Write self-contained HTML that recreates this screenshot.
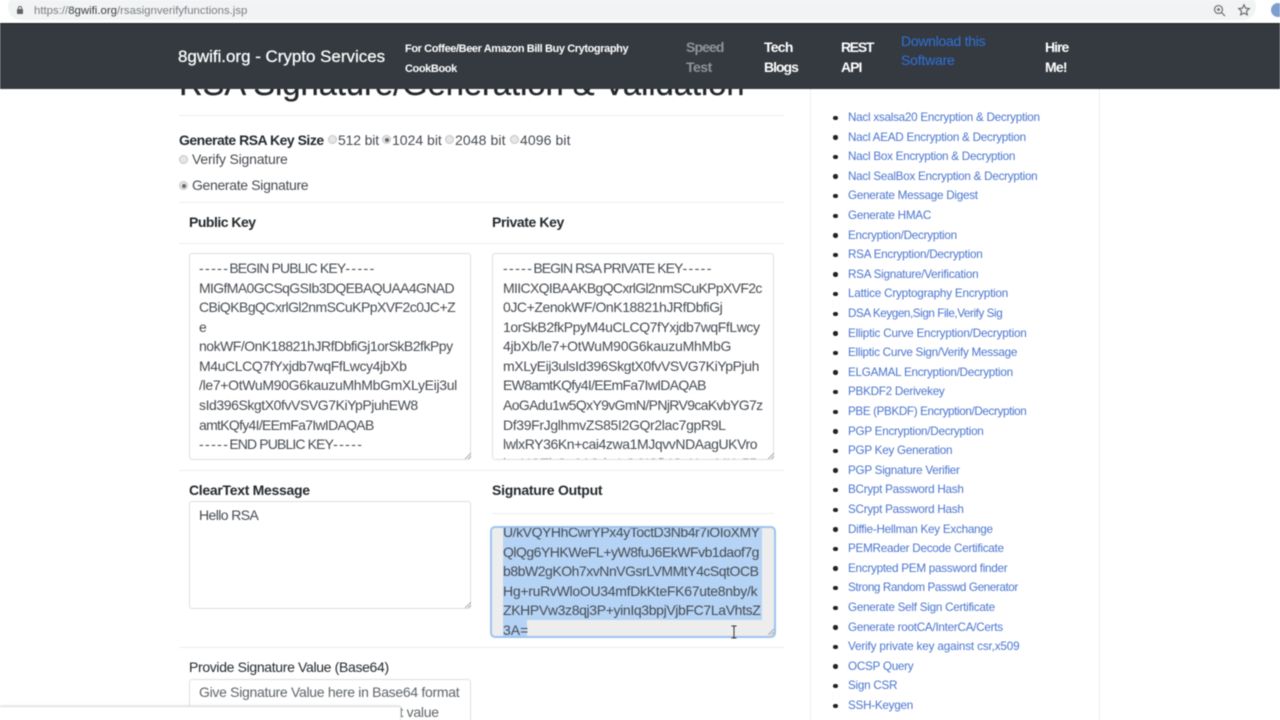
<!DOCTYPE html>
<html><head><meta charset="utf-8"><title>RSA Signature</title>
<style>
html,body{margin:0;padding:0;width:1280px;height:720px;overflow:hidden;background:#fff}
#w{position:relative;width:1280px;height:720px;overflow:hidden;font-family:"Liberation Sans",Arial,sans-serif;font-size:14px;color:#464b51;filter:blur(.4px)}
.a{position:absolute}
.t{position:absolute;white-space:pre;line-height:20px;height:20px}
.hr{position:absolute;height:1px;background:#ececec}
.b{font-weight:700;color:#24292d}
.ta{position:absolute;box-sizing:border-box;border:1px solid #dcdfe2;border-radius:3px;background:#fff;overflow:hidden}
.r{position:absolute;width:9px;height:9px;border-radius:50%;background:#e6e6e6;border:1px solid #c4c4c4;box-sizing:border-box}
.r.on::after{content:"";position:absolute;left:1.5px;top:1.5px;width:4px;height:4px;border-radius:50%;background:#666}
.n{color:#fff;font-weight:700;font-size:14px;letter-spacing:-.5px}
.s{font-size:11px;letter-spacing:-.4px}
.l{color:#4a74cf;font-size:11.7px;left:848px;letter-spacing:-.26px;margin-top:.6px}
.d{position:absolute;left:833px;width:4.5px;height:4.5px;border-radius:50%;background:#222}
.sel{background:#b5d3f5}
.k{letter-spacing:1.4px}
.m{letter-spacing:-.87px}
</style></head><body><div id="w">

<div class="a" style="left:8px;top:-6px;width:1248px;height:26px;background:#f1f3f4;border-radius:13px"></div>
<svg class="a" style="left:15px;top:5px" width="10" height="10" viewBox="0 0 10 10"><rect x="2" y="4" width="6" height="5" rx=".6" fill="#5f6368"/><path d="M3.4 4V3a1.6 1.6 0 0 1 3.2 0v1" fill="none" stroke="#5f6368"/></svg>
<div class="t" style="left:34px;top:1px;font-size:11.4px;color:#7a7e83">https://<span style="color:#3c4043">8gwifi.org</span>/rsasignverifyfunctions.jsp</div>
<svg class="a" style="left:1213px;top:4px" width="13" height="13" viewBox="0 0 13 13" fill="none" stroke="#5f6368" stroke-width="1.1"><circle cx="5.5" cy="5.5" r="4"/><path d="M8.5 8.5l3.5 3.5M3.7 5.5h3.6M5.5 3.7v3.6"/></svg>
<svg class="a" style="left:1237px;top:3px" width="14" height="14" viewBox="0 0 14 14" fill="none" stroke="#5f6368" stroke-width="1.1"><path d="M7 1.8l1.6 3.4 3.7.4-2.8 2.5.8 3.7L7 10l-3.3 1.8.8-3.7L1.7 5.6l3.7-.4z"/></svg>
<div class="a" style="left:1271px;top:3px;width:14px;height:14px;border-radius:50%;background:#7d9fd0"></div>

<div class="t" style="left:179px;top:61px;font-size:32.65px;line-height:46px;height:46px;color:#23272b;-webkit-text-stroke:.3px #23272b">RSA Signature/Generation &amp; Validation</div>

<div class="a" style="left:0;top:24px;width:1280px;height:65px;background:#343a40"></div>
<div class="a" style="left:0;top:23px;width:1280px;height:1px;background:#222"></div>
<div class="t" style="left:178px;top:47px;font-size:16.95px;color:#fff;-webkit-text-stroke:.25px #fff">8gwifi.org - Crypto Services</div>
<div class="t n s" style="left:405px;top:39px">For Coffee/Beer Amazon Bill Buy Crytography</div>
<div class="t n s" style="left:405px;top:59px">CookBook</div>
<div class="t n" style="left:686px;top:37px;color:#8f9499;letter-spacing:-.9px">Speed</div>
<div class="t n" style="left:686px;top:57px;color:#8f9499">Test</div>
<div class="t n" style="left:764px;top:37px;letter-spacing:-.75px">Tech</div>
<div class="t n" style="left:764px;top:57px;letter-spacing:-1px">Blogs</div>
<div class="t n" style="left:841px;top:37px;letter-spacing:-1.3px">REST</div>
<div class="t n" style="left:841px;top:57px;letter-spacing:-1px">API</div>
<div class="t n" style="left:901px;top:31px;color:#2f72de;font-weight:400;letter-spacing:-.28px">Download this</div>
<div class="t n" style="left:901px;top:50px;color:#2f72de;font-weight:400;letter-spacing:-.2px">Software</div>
<div class="t n" style="left:1045px;top:37px;letter-spacing:-1px">Hire</div>
<div class="t n" style="left:1045px;top:57px;letter-spacing:-.8px">Me!</div>

<div class="hr" style="left:179px;top:115px;width:605px"></div>
<div class="t b" style="left:179px;top:130px;letter-spacing:-.5px">Generate RSA Key Size</div>
<div class="r" style="left:328px;top:135px"></div><div class="t" style="left:338px;top:130px;letter-spacing:-.15px">512 bit</div>
<div class="r on" style="left:382px;top:135px"></div><div class="t" style="left:392px;top:130px">1024 bit</div>
<div class="r" style="left:445px;top:135px"></div><div class="t" style="left:455px;top:130px;letter-spacing:.1px">2048 bit</div>
<div class="r" style="left:510px;top:135px"></div><div class="t" style="left:520px;top:130px;letter-spacing:.1px">4096 bit</div>
<div class="r" style="left:179px;top:155px"></div><div class="t" style="left:192px;top:149px;letter-spacing:-.2px">Verify Signature</div>
<div class="r on" style="left:179px;top:181px"></div><div class="t" style="left:192px;top:175px;letter-spacing:-.33px">Generate Signature</div>
<div class="hr" style="left:179px;top:202px;width:605px"></div>

<div class="t b" style="left:189px;top:212px;letter-spacing:-.5px">Public Key</div>
<div class="t b" style="left:492px;top:212px;letter-spacing:-.4px">Private Key</div>
<div class="hr" style="left:179px;top:243px;width:605px"></div>

<div class="ta" style="left:189px;top:253px;width:282px;height:207px"></div>
<div class="t" style="left:199px;top:258px"><span class="k">-----</span><span class="m">BEGIN PUBLIC KEY</span><span class="k">-----</span></div>
<div class="t" style="left:199px;top:277.5px;letter-spacing:-.63px">MIGfMA0GCSqGSIb3DQEBAQUAA4GNAD</div>
<div class="t" style="left:199px;top:297px;letter-spacing:-.55px">CBiQKBgQCxrlGl2nmSCuKPpXVF2c0JC+Z</div>
<div class="t" style="left:199px;top:317px">e</div>
<div class="t" style="left:199px;top:336px;letter-spacing:-.5px">nokWF/OnK18821hJRfDbfiGj1orSkB2fkPpy</div>
<div class="t" style="left:199px;top:356px;letter-spacing:-.4px">M4uCLCQ7fYxjdb7wqFfLwcy4jbXb</div>
<div class="t" style="left:199px;top:375px;letter-spacing:-.32px">/le7+OtWuM90G6kauzuMhMbGmXLyEij3ul</div>
<div class="t" style="left:199px;top:395px;letter-spacing:-.43px">sId396SkgtX0fvVSVG7KiYpPjuhEW8</div>
<div class="t" style="left:199px;top:414.5px;letter-spacing:-.7px">amtKQfy4I/EEmFa7IwIDAQAB</div>
<div class="t" style="left:199px;top:434px"><span class="k">-----</span><span class="m">END PUBLIC KEY</span><span class="k">-----</span></div>

<div class="ta" style="left:492px;top:253px;width:282px;height:207px"></div>
<div class="t" style="left:503px;top:258px"><span class="k">-----</span><span style="letter-spacing:-.95px">BEGIN RSA PRIVATE KEY</span><span class="k">-----</span></div>
<div class="t" style="left:503px;top:277.5px;letter-spacing:-.65px">MIICXQIBAAKBgQCxrlGl2nmSCuKPpXVF2c</div>
<div class="t" style="left:503px;top:297px;letter-spacing:-.43px">0JC+ZenokWF/OnK18821hJRfDbfiGj</div>
<div class="t" style="left:503px;top:317px;letter-spacing:-.43px">1orSkB2fkPpyM4uCLCQ7fYxjdb7wqFfLwcy</div>
<div class="t" style="left:503px;top:336px;letter-spacing:-.24px">4jbXb/le7+OtWuM90G6kauzuMhMbG</div>
<div class="t" style="left:503px;top:356px;letter-spacing:-.4px">mXLyEij3ulsId396SkgtX0fvVSVG7KiYpPjuh</div>
<div class="t" style="left:503px;top:375px;letter-spacing:-.7px">EW8amtKQfy4I/EEmFa7IwIDAQAB</div>
<div class="t" style="left:503px;top:395px;letter-spacing:-.64px">AoGAdu1w5QxY9vGmN/PNjRV9caKvbYG7z</div>
<div class="t" style="left:503px;top:414.5px;letter-spacing:-.35px">Df39FrJglhmvZS85I2GQr2lac7gpR9L</div>
<div class="t" style="left:503px;top:434px;letter-spacing:-.41px">lwlxRY36Kn+cai4zwa1MJqvvNDAagUKVro</div>
<div class="a" style="left:503px;top:454px;width:260px;height:5px;overflow:hidden"><div class="t" style="left:0;top:-1px;opacity:.7;letter-spacing:-.4px">ksrUOTbGn9AJxbsLGCISfhIGsHwsMKy55</div></div>

<svg class="a" style="left:464px;top:452px" width="7" height="7" viewBox="0 0 7 7" stroke="#999" stroke-width=".8"><path d="M1 7L7 1M4 7l3-3"/></svg>
<svg class="a" style="left:767px;top:452px" width="7" height="7" viewBox="0 0 7 7" stroke="#999" stroke-width=".8"><path d="M1 7L7 1M4 7l3-3"/></svg>

<div class="hr" style="left:179px;top:470px;width:605px"></div>
<div class="t b" style="left:189px;top:480px;letter-spacing:-.3px">ClearText Message</div>
<div class="t b" style="left:492px;top:480px;letter-spacing:-.25px">Signature Output</div>
<div class="hr" style="left:492px;top:513px;width:282px"></div>

<div class="ta" style="left:189px;top:501px;width:282px;height:108px"></div>
<div class="t" style="left:199px;top:505px;letter-spacing:-.6px">Hello RSA</div>
<svg class="a" style="left:464px;top:601px" width="7" height="7" viewBox="0 0 7 7" stroke="#999" stroke-width=".8"><path d="M1 7L7 1M4 7l3-3"/></svg>

<div class="a" style="left:490px;top:526px;width:286px;height:112px;box-sizing:border-box;border:2px solid #9cc3ef;border-radius:5px;background:#ededed;overflow:hidden">
 <div class="a sel" style="left:11px;top:0;width:259px;height:92px"></div>
 <div class="a sel" style="left:11px;top:92px;width:24px;height:16px"></div>
 <div class="t" style="left:11px;top:-6px;letter-spacing:-.44px">U/kVQYHhCwrYPx4yToctD3Nb4r7iOIoXMY</div>
 <div class="t" style="left:11px;top:13.5px;letter-spacing:-.5px">QlQg6YHKWeFL+yW8fuJ6EkWFvb1daof7g</div>
 <div class="t" style="left:11px;top:33px;letter-spacing:-.47px">b8bW2gKOh7xvNnVGsrLVMMtY4cSqtOCB</div>
 <div class="t" style="left:11px;top:52.5px;letter-spacing:-.29px">Hg+ruRvWloOU34mfDkKteFK67ute8nby/k</div>
 <div class="t" style="left:11px;top:72px;letter-spacing:-.36px">ZKHPVw3z8qj3P+yinIq3bpjVjbFC7LaVhtsZ</div>
 <div class="t" style="left:11px;top:92px">3A=</div>
</div>
<svg class="a" style="left:767px;top:628px" width="7" height="7" viewBox="0 0 7 7" stroke="#999" stroke-width=".8"><path d="M1 7L7 1M4 7l3-3"/></svg>
<svg class="a" style="left:730px;top:625px" width="8" height="14" viewBox="0 0 8 14" fill="none" stroke="#333" stroke-width="1"><path d="M1.5 1H4M6.5 1H4M4 1v12M1.5 13H4M6.5 13H4"/></svg>
<div class="hr" style="left:179px;top:647px;width:605px"></div>

<div class="t" style="left:189px;top:657px;color:#24292d;letter-spacing:-.34px">Provide Signature Value (Base64)</div>
<div class="ta" style="left:189px;top:679px;width:282px;height:60px"></div>
<div class="t" style="left:199px;top:682px;color:#5f6469;letter-spacing:-.3px">Give Signature Value here in Base64 format</div>
<div class="t" style="left:199px;top:702px;color:#5f6469;letter-spacing:-.25px">Signature Base64 encoded output value</div>
<div class="a" style="left:0;top:706px;width:401px;height:14px;background:#fff;border-top:1px solid #ddd;border-right:1px solid #e4e4e4;border-radius:0 2px 0 0;box-sizing:border-box;box-shadow:0 -1px 2px rgba(0,0,0,.08)"></div>

<div class="a" style="left:810px;top:89px;width:290px;height:631px;box-sizing:border-box;border-left:1px solid #ececec;border-right:1px solid #ececec"></div>

<div class="d" style="top:115.5px"></div><div class="t l" style="top:107.5px">Nacl xsalsa20 Encryption &amp; Decryption</div>
<div class="d" style="top:135px"></div><div class="t l" style="top:127px">Nacl AEAD Encryption &amp; Decryption</div>
<div class="d" style="top:154.7px"></div><div class="t l" style="top:146.7px">Nacl Box Encryption &amp; Decryption</div>
<div class="d" style="top:174.3px"></div><div class="t l" style="top:166.3px">Nacl SealBox Encryption &amp; Decryption</div>
<div class="d" style="top:193.9px"></div><div class="t l" style="top:185.9px">Generate Message Digest</div>
<div class="d" style="top:213.5px"></div><div class="t l" style="top:205.5px">Generate HMAC</div>
<div class="d" style="top:233.1px"></div><div class="t l" style="top:225.1px">Encryption/Decryption</div>
<div class="d" style="top:252.7px"></div><div class="t l" style="top:244.7px">RSA Encryption/Decryption</div>
<div class="d" style="top:272.3px"></div><div class="t l" style="top:264.3px">RSA Signature/Verification</div>
<div class="d" style="top:291.9px"></div><div class="t l" style="top:283.9px;letter-spacing:-.2px">Lattice Cryptography Encryption</div>
<div class="d" style="top:311.5px"></div><div class="t l" style="top:303.5px;letter-spacing:-.43px">DSA Keygen,Sign File,Verify Sig</div>
<div class="d" style="top:331.1px"></div><div class="t l" style="top:323.1px;letter-spacing:-.2px">Elliptic Curve Encryption/Decryption</div>
<div class="d" style="top:350.7px"></div><div class="t l" style="top:342.7px">Elliptic Curve Sign/Verify Message</div>
<div class="d" style="top:370.3px"></div><div class="t l" style="top:362.3px">ELGAMAL Encryption/Decryption</div>
<div class="d" style="top:389.9px"></div><div class="t l" style="top:381.9px">PBKDF2 Derivekey</div>
<div class="d" style="top:409.5px"></div><div class="t l" style="top:401.5px;letter-spacing:-.38px">PBE (PBKDF) Encryption/Decryption</div>
<div class="d" style="top:429.1px"></div><div class="t l" style="top:421.1px">PGP Encryption/Decryption</div>
<div class="d" style="top:448.7px"></div><div class="t l" style="top:440.7px">PGP Key Generation</div>
<div class="d" style="top:468.3px"></div><div class="t l" style="top:460.3px">PGP Signature Verifier</div>
<div class="d" style="top:487.9px"></div><div class="t l" style="top:479.9px">BCrypt Password Hash</div>
<div class="d" style="top:507.5px"></div><div class="t l" style="top:499.5px">SCrypt Password Hash</div>
<div class="d" style="top:527.1px"></div><div class="t l" style="top:519.1px">Diffie-Hellman Key Exchange</div>
<div class="d" style="top:546.7px"></div><div class="t l" style="top:538.7px">PEMReader Decode Certificate</div>
<div class="d" style="top:566.3px"></div><div class="t l" style="top:558.3px">Encrypted PEM password finder</div>
<div class="d" style="top:585.9px"></div><div class="t l" style="top:577.9px;letter-spacing:-.4px">Strong Random Passwd Generator</div>
<div class="d" style="top:605.5px"></div><div class="t l" style="top:597.5px">Generate Self Sign Certificate</div>
<div class="d" style="top:625.1px"></div><div class="t l" style="top:617.1px">Generate rootCA/InterCA/Certs</div>
<div class="d" style="top:644.7px"></div><div class="t l" style="top:636.7px;letter-spacing:-.15px">Verify private key against csr,x509</div>
<div class="d" style="top:664.3px"></div><div class="t l" style="top:656.3px">OCSP Query</div>
<div class="d" style="top:683.9px"></div><div class="t l" style="top:675.9px">Sign CSR</div>
<div class="d" style="top:703.5px"></div><div class="t l" style="top:695.5px">SSH-Keygen</div>

</div></body></html>
